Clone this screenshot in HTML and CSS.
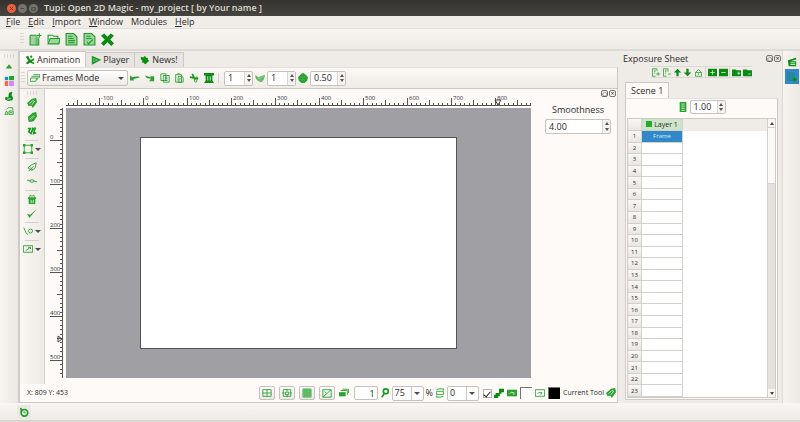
FILE: index.html
```html
<!DOCTYPE html>
<html lang="en">
<head>
<meta charset="utf-8">
<title>Tupi: Open 2D Magic</title>
<link rel="stylesheet" href="styles.css">
</head>
<body>
<svg class="defs" aria-hidden="true">
  <symbol id="new" viewBox="0 0 12 12"><path class="soft" d="M1 2h7v9H1z"/><path class="line" d="M1 2h6M1 2v9h8V5"/><path class="fill" d="M6 3v8h3V4z" opacity=".5"/><path class="line" d="M9.500.3v4M7.500 2.300h4"/></symbol>
  <symbol id="open" viewBox="0 0 12 12"><path class="line" d="M1 9V2h4l1 1h4v2"/><path class="soft" d="M2 5h10l-1 5H1z"/><path class="line" d="M3 5h9l-1 5H1z"/></symbol>
  <symbol id="save" viewBox="0 0 12 12"><path class="soft" d="M1 .5h7l3 3V11H1z"/><path class="line" d="M1 .5h7l3 3V11H1zM3 3h4M3 5h5M3 7h6M3 9h6"/></symbol>
  <symbol id="saveas" viewBox="0 0 12 12"><path class="soft" d="M1 .5h7l3 3V11H1z"/><path class="line" d="M1 .5h7l3 3V11H1zM3 3h4M3 5h5M4 8l1 2 4-4"/></symbol>
  <symbol id="close" viewBox="0 0 12 12"><path class="dark" d="M3 .5 6 3.500 9 .5 12 2.500 8.500 6 12 9.500 9.500 12 6 8.500 2.500 12 0 9.500 3.500 6 0 2.500z"/></symbol>
  <symbol id="anim" viewBox="0 0 12 12"><path class="dark" d="M1 2 4 1l1 3 2 2 4-2v2L8 8l3 1v2L6 9l-3 2-2-1 3-3z"/><circle class="dark" cx="7.500" cy="2" r="1.300"/></symbol>
  <symbol id="play" viewBox="0 0 12 12"><path class="thick" d="M2 2.500 10 6 2 10z"/><path class="fill" d="M3 4v4l4-2z"/></symbol>
  <symbol id="news" viewBox="0 0 12 12"><path class="dark" d="M1 2l3 1 2-2 1 2 3 1-1 1 2 2-3 3-2 1-2-2H2l1-2-2-2z"/></symbol>
  <symbol id="frames" viewBox="0 0 12 12"><path class="line" d="M1 6h7l-1 4H0zM2 4h8l-1 4M4 2h8l-1 4"/></symbol>
  <symbol id="undo" viewBox="0 0 12 12"><path class="fill" d="M0 3v6h5L4 7.500 12 5 9 4 3 5z"/></symbol>
  <symbol id="redo" viewBox="0 0 12 12"><path class="fill" d="M11 10V4H6l1.500 1.500L0 3l2 3 5 1-2 3z"/></symbol>
  <symbol id="copy" viewBox="0 0 12 12"><path class="line" d="M1 1h6v8H1zM4 3h7v8H4zM6 5h3M6 7h3M6 9h3"/></symbol>
  <symbol id="paste" viewBox="0 0 12 12"><path class="line" d="M2 2h7v9H2zM4 1h3M5 4h5l1 2v5H5zM7 6v3"/></symbol>
  <symbol id="cut" viewBox="0 0 12 12"><path class="thick" d="M4 1l3 7M1 5l10 2"/><circle class="line" cx="8" cy="9.500" r="1.500"/><circle class="line" cx="9.500" cy="5.500" r="1"/></symbol>
  <symbol id="trash" viewBox="0 0 12 12"><path class="dark" d="M0 0h12v3H0zM2 3h8v6l2 3H0l2-3z"/><path class="pale" d="M4.500 4v5M7.500 4v5"/></symbol>
  <symbol id="hand" viewBox="0 0 12 12"><path class="fill" d="M0 2l4 3 3-1 5-2-1 5-3 4-4-1-3-3z" opacity=".7"/><path class="pale" d="M4 6l2 1 3-3" opacity=".5"/></symbol>
  <symbol id="drop" viewBox="0 0 12 12"><path class="fill" d="M6 0 8 1l4 4-1 4-3 3H4L1 9 0 5l4-4z"/><path class="pale" d="M3 5h6M3 8h5" opacity=".2"/></symbol>
  <symbol id="pencil" viewBox="0 0 12 12"><path class="fill" d="M0 6l6-5 5-1 1 5-5 7-2-3-3 1z"/><path class="pale" d="M3 7l4-4 2 1-3 4" /></symbol>
  <symbol id="ink" viewBox="0 0 12 12"><path class="fill" d="M1 6l6-5 4-1 1 5-4 6-6 1z"/><path class="pale" d="M3 9l5-5M5 9l4-4" opacity=".8"/></symbol>
  <symbol id="scheme" viewBox="0 0 12 12"><path class="thick" d="M1 3h3l-2 4 3 2 2-6 2 1-1 5 3-1"/><circle class="fill" cx="9.500" cy="3" r="1.500"/></symbol>
  <symbol id="rect" viewBox="0 0 12 12"><path class="line" d="M1.500 1.500h9v9h-9z"/><path class="fill" d="M0 0h3v3H0zM9 0h3v3H9zM9 9h3v3H9zM0 9h3v3H0z"/></symbol>
  <symbol id="pen" viewBox="0 0 12 12"><path class="line" d="M1 7l5-4 5-2-1 6-4 3zM2 11l6-6M4 7l3 2"/></symbol>
  <symbol id="node" viewBox="0 0 12 12"><path class="line" d="M0 5l4 1M8 6l4 1"/><ellipse class="line" cx="6" cy="6" rx="2.500" ry="1.500"/></symbol>
  <symbol id="bucket" viewBox="0 0 12 12"><path class="fill" d="M1 4h10v2H1zM2 6h8v6H2z"/><path class="line" d="M3 4l1-3 2 2 2-2 1 3"/><path class="pale" d="M5 7v4M7.500 7v4"/></symbol>
  <symbol id="brush" viewBox="0 0 12 12"><path class="fill" d="M12 1 6 8 3 12 0 7l4 1z"/></symbol>
  <symbol id="motion" viewBox="0 0 12 12"><path class="line" d="M1 2l3 7 2 1"/><circle class="line" cx="9" cy="6" r="2.400"/></symbol>
  <symbol id="view" viewBox="0 0 12 12"><path class="line" d="M.5 2h11v8H.5zM3 8l6-4M6 4h3v2"/></symbol>
  <symbol id="shapes" viewBox="0 0 12 12"><path d="M1 1h4v4H1z" fill="#1689e8"/><path d="M6 0h6v5H6z" fill="#20a829"/><path d="M1 6h4v6H1z" fill="#ff6734"/><path d="M6 6h6v6H6z" fill="#d486ff"/></symbol>
  <symbol id="lamp" viewBox="0 0 12 12"><path class="dark" d="M6 2l4-1-1 4 2 3-1 3-5 1-4-2 1-3 3 1z"/><path class="pale" d="M4 10l4-1"/></symbol>
  <symbol id="group" viewBox="0 0 12 12"><path class="line" d="M1 10l2-4 2 4zM3 4l2-2h5l1 3M6 10V6h5v4zM7 8h3"/></symbol>
  <symbol id="g1" viewBox="0 0 12 12"><path class="line" d="M1 2h10v8H1zM6 2v8M1 6h10"/></symbol>
  <symbol id="g2" viewBox="0 0 12 12"><path class="line" d="M1.500 2h9v8h-9zM4 5h4v3H4zM6 1v3M6 8v3M0 6h3M9 6h3"/></symbol>
  <symbol id="g3" viewBox="0 0 12 12"><path class="soft" d="M1 1h10v10H1z"/><path class="line" d="M1 1h10v10H1zM3.500 1v10M6 1v10M8.500 1v10M1 3.500h10M1 6h10M1 8.500h10" opacity=".7"/></symbol>
  <symbol id="g4" viewBox="0 0 12 12"><path class="line" d="M1 2h10v9H1zM1 11l10-9M3 4l2 2"/></symbol>
  <symbol id="onion" viewBox="0 0 12 12"><path class="fill" d="M0 5h8v5H0z"/><path class="line" d="M2 3h8v5M4 1.500h7.500V6"/></symbol>
  <symbol id="zoomi" viewBox="0 0 12 12"><circle class="thick" cx="7" cy="4" r="3"/><path class="thick" d="M5 7l-3 4"/></symbol>
  <symbol id="rot" viewBox="0 0 12 12"><path class="line" d="M2 4h8v4H2zM2 2l3-1h4l1 1M10 .5V3M10 10l-3 1H3L2 10M2 11.500V9"/></symbol>
  <symbol id="alias" viewBox="0 0 12 12"><path class="dark" d="M6 1h6v4H9v2H7v3H5v2H0V8h2V6h4z"/></symbol>
  <symbol id="fillc" viewBox="0 0 12 12"><path class="fill" d="M0 2h12v8H0z"/><path class="pale" d="M3 7l2-2 4 1M7 7h2"/></symbol>
  <symbol id="linec" viewBox="0 0 12 12"><path class="line" d="M.5 2h11v8H.5zM3 7l2-2 3 1M7 8l1-3"/></symbol>
  <symbol id="fplus" viewBox="0 0 12 12"><path class="line" d="M8 4V1H2v10h4M4 3h2M4 5h2M4 7h1M7 8h5M9.500 5.500v5"/></symbol>
  <symbol id="fminus" viewBox="0 0 12 12"><path class="line" d="M8 5V1H2v10h4M4 3h2M4 5h2M4 7h1M8 8h4"/></symbol>
  <symbol id="up" viewBox="0 0 12 12"><path class="dark" d="M6 1l5 5H7.500v5h-3V6H1z"/></symbol>
  <symbol id="down" viewBox="0 0 12 12"><path class="dark" d="M6 11 1 6h3.500V1h3v5H11z"/></symbol>
  <symbol id="lock" viewBox="0 0 12 12"><path class="line" d="M2 6h8v5H2zM2 6l4-4 4 4M6 7v2"/></symbol>
  <symbol id="plus" viewBox="0 0 12 12"><path class="dark" d="M0 1h12v10H0z"/><path class="pale" d="M3 6h6M6 3v6"/></symbol>
  <symbol id="minus" viewBox="0 0 12 12"><path class="dark" d="M0 1h12v10H0z"/><path class="pale" d="M3 6h6"/></symbol>
  <symbol id="folderp" viewBox="0 0 12 12"><path class="dark" d="M0 2h5l1 1h6v8H0z"/><path class="pale" d="M7 7h4M9 5v4"/></symbol>
  <symbol id="folderm" viewBox="0 0 12 12"><path class="dark" d="M0 2h5l1 1h6v8H0z"/><path class="pale" d="M7 8h3"/></symbol>
  <symbol id="sheet" viewBox="0 0 12 12"><path class="fill" d="M2 0h8v12H2z"/><path class="pale" d="M4 2.500h4M4 5h4M4 7.500h4M4 10h4"/></symbol>
  <symbol id="books" viewBox="0 0 12 12"><path class="dark" d="M1 4l10-3v2L4 5h7v6H2z"/><path class="pale" d="M4 7h6M4 9h6"/></symbol>
  <symbol id="grid" viewBox="0 0 12 12"><path d="M0 1h9v9H0zM0 3h9M0 5.500h9M0 8h9M3 1v9M6 1v9" fill="none" stroke="#1c8a86"/><path class="dark" d="M8 6l4 3-3 3-2-3z"/></symbol>
  <symbol id="timer" viewBox="0 0 12 12"><circle class="thick" cx="6.500" cy="7" r="4"/><path class="thick" d="M2 1l1 4"/><path class="line" d="M6 5v2h2"/></symbol>
  <symbol id="triup" viewBox="0 0 12 12"><path class="fill" d="M6 4l4 5H2z"/></symbol>
</svg>

<header class="titlebar">
  <button class="wm wm-close" aria-label="Close"><svg viewBox="0 0 8 8"><path d="M2 2l4 4M6 2 2 6"/></svg></button>
  <button class="wm" aria-label="Minimize"><svg viewBox="0 0 8 8"><path d="M2 4h4"/></svg></button>
  <button class="wm" aria-label="Maximize"><svg viewBox="0 0 8 8"><path d="M2 3h4v3H2z"/></svg></button>
  <h1>Tupi: Open 2D Magic - my_project [ by Your name ]</h1>
</header>
<nav class="menubar">
  <button><u>F</u>ile</button><button><u>E</u>dit</button><button><u>I</u>mport</button><button><u>W</u>indow</button><button>Modules</button><button><u>H</u>elp</button>
</nav>
<div class="toolbar">
  <span class="grip"></span>
  <button aria-label="New"><svg><use href="#new"/></svg></button>
  <button aria-label="Open"><svg><use href="#open"/></svg></button>
  <button aria-label="Save"><svg><use href="#save"/></svg></button>
  <button aria-label="Save as"><svg><use href="#saveas"/></svg></button>
  <button aria-label="Close project"><svg><use href="#close"/></svg></button>
</div>

<div class="workspace">
  <aside class="dock">
    <span class="grip-h"></span>
    <button aria-label="Collapse"><svg><use href="#triup"/></svg></button>
    <button aria-label="Colors"><svg><use href="#shapes"/></svg></button>
    <button aria-label="Brushes"><svg><use href="#lamp"/></svg></button>
    <button aria-label="Library"><svg><use href="#group"/></svg></button>
  </aside>

  <main class="center">
    <div class="tabs">
      <button class="tab active"><svg><use href="#anim"/></svg>Animation</button>
      <button class="tab"><svg><use href="#play"/></svg>Player</button>
      <button class="tab"><svg><use href="#news"/></svg>News!</button>
    </div>
    <div class="framebar">
      <span class="grip"></span>
      <div class="combo mode"><svg class="lead"><use href="#frames"/></svg><select aria-label="Mode"><option>Frames Mode</option></select><i class="tri"></i></div>
      <div class="edit">
        <button aria-label="Undo"><svg><use href="#undo"/></svg></button>
        <button aria-label="Redo"><svg><use href="#redo"/></svg></button>
        <button aria-label="Copy"><svg><use href="#copy"/></svg></button>
        <button aria-label="Paste"><svg><use href="#paste"/></svg></button>
        <button aria-label="Cut"><svg><use href="#cut"/></svg></button>
        <button aria-label="Delete"><svg><use href="#trash"/></svg></button>
      </div>
      <span class="vsep"></span>
      <div class="spin"><input aria-label="Previous frames" value="1"><span><button aria-label="Up"></button><button aria-label="Down"></button></span></div>
      <svg><use href="#hand"/></svg>
      <div class="spin"><input aria-label="Next frames" value="1"><span><button aria-label="Up"></button><button aria-label="Down"></button></span></div>
      <svg><use href="#drop"/></svg>
      <div class="spin wide"><input aria-label="Opacity" value="0.50"><span><button aria-label="Up"></button><button aria-label="Down"></button></span></div>
    </div>

    <div class="editor">
      <div class="tools">
        <span class="grip-h"></span>
        <button aria-label="Pencil"><svg><use href="#pencil"/></svg></button>
        <button aria-label="Ink"><svg><use href="#ink"/></svg></button>
        <button aria-label="Scheme"><svg><use href="#scheme"/></svg></button>
        <hr>
        <button aria-label="Rectangle"><svg><use href="#rect"/></svg><i class="tri"></i></button>
        <hr>
        <button aria-label="Select"><svg><use href="#pen"/></svg></button>
        <button aria-label="Nodes"><svg><use href="#node"/></svg></button>
        <hr>
        <button aria-label="Fill"><svg><use href="#bucket"/></svg></button>
        <button aria-label="Line color"><svg><use href="#brush"/></svg></button>
        <hr>
        <button aria-label="Motion"><svg><use href="#motion"/></svg><i class="tri"></i></button>
        <hr>
        <button aria-label="View"><svg><use href="#view"/></svg><i class="tri"></i></button>
      </div>
      <div class="stage">
        <svg class="ruler-x" id="rulerX"></svg>
        <svg class="ruler-y" id="rulerY"></svg>
        <div class="canvas"><div class="paper"></div></div>
      </div>
      <div class="props">
        <div class="dockbtns"><button aria-label="Float">◇</button><button aria-label="Close">×</button></div>
        <label for="smooth">Smoothness</label>
        <div class="spin"><input id="smooth" value="4.00"><span><button aria-label="Up"></button><button aria-label="Down"></button></span></div>
      </div>
    </div>

    <div class="statusrow">
      <span class="coords">X: 809 Y: 453</span>
      <div class="views">
        <button aria-label="Grid"><svg><use href="#g1"/></svg></button>
        <button aria-label="Safe area"><svg><use href="#g2"/></svg></button>
        <button aria-label="Fine grid"><svg><use href="#g3"/></svg></button>
        <button aria-label="Full"><svg><use href="#g4"/></svg></button>
      </div>
      <svg class="mid"><use href="#onion"/></svg>
      <input class="frame" aria-label="Frame" value="1">
      <svg><use href="#zoomi"/></svg>
      <div class="combo split"><select aria-label="Zoom"><option>75</option></select><i class="tri"></i></div>
      <span class="pct">%</span>
      <svg><use href="#rot"/></svg>
      <div class="combo split"><select aria-label="Rotation"><option>0</option></select><i class="tri"></i></div>
      <input type="checkbox" aria-label="Antialiasing" checked>
      <svg><use href="#alias"/></svg>
      <svg class="mid"><use href="#fillc"/></svg>
      <button class="swatch" aria-label="Fill color"></button>
      <svg class="mid"><use href="#linec"/></svg>
      <button class="swatch black" aria-label="Stroke color"></button>
      <span class="current">Current Tool</span>
      <svg><use href="#pencil"/></svg>
    </div>
  </main>

  <section class="exposure">
    <div class="head"><h2>Exposure Sheet</h2><div class="dockbtns"><button aria-label="Float">◇</button><button aria-label="Close">×</button></div></div>
    <div class="sheetbar">
      <button aria-label="Insert frame"><svg><use href="#fplus"/></svg></button>
      <button aria-label="Remove frame"><svg><use href="#fminus"/></svg></button>
      <button aria-label="Move up"><svg><use href="#up"/></svg></button>
      <button aria-label="Move down"><svg><use href="#down"/></svg></button>
      <button aria-label="Lock"><svg><use href="#lock"/></svg></button>
      <span class="vsep"></span>
      <button aria-label="Insert layer"><svg><use href="#plus"/></svg></button>
      <button aria-label="Remove layer"><svg><use href="#minus"/></svg></button>
      <span class="vsep"></span>
      <button aria-label="Insert scene"><svg><use href="#folderp"/></svg></button>
      <button aria-label="Remove scene"><svg><use href="#folderm"/></svg></button>
    </div>
    <button class="tab active scene">Scene 1</button>
    <div class="pane">
      <div class="opacity"><svg><use href="#sheet"/></svg><div class="spin wide"><input aria-label="Layer opacity" value="1.00"><span><button aria-label="Up"></button><button aria-label="Down"></button></span></div></div>
      <div class="sheet">
        <div class="cells"><table>
          <thead><tr><th></th><th><b></b>Layer 1</th></tr></thead>
          <tbody id="rows"></tbody>
        </table></div>
        <div class="scroll"><button aria-label="Scroll up"></button><div class="thumb"></div><button aria-label="Scroll down"></button></div>
      </div>
    </div>
  </section>

  <aside class="dock right">
    <button aria-label="Help"><svg><use href="#books"/></svg></button>
    <button class="on" aria-label="Exposure sheet"><svg><use href="#grid"/></svg></button>
  </aside>
</div>

<footer class="bottom"><button aria-label="Time line"><svg><use href="#timer"/></svg></button></footer>
<script src="app.js"></script>
</body>
</html>
```
FILE: styles.css
```css
* { box-sizing: border-box; margin: 0; }
body {
  height: 100vh;
  display: flex;
  flex-direction: column;
  overflow: hidden;
  background: #efebe7;
  color: #2c2c2c;
  font: 9px/12px "Open Sans", "Noto Sans", sans-serif;
}
button, input, select { font: inherit; color: inherit; padding: 0; border: 0; background: none; }
button { display: flex; align-items: center; justify-content: center; }
svg { display: block; width: 10px; height: 10px; flex: none; }
.defs { position: absolute; width: 0; height: 0; }
.fill { fill: #2ba232; }
.dark { fill: #0a8c12; }
.soft { fill: #9fd3a0; }
.line { fill: none; stroke: #1f9c26; stroke-width: 1; }
.thick { fill: none; stroke: #189a20; stroke-width: 2; }
.pale { fill: none; stroke: #e6f5e4; stroke-width: 1; }

.titlebar {
  height: 16px;
  display: flex;
  align-items: center;
  gap: 2px;
  padding-left: 7px;
  background: linear-gradient(#33322e, #45443f);
  color: #dfdbd2;
}
.titlebar h1 { font-size: 9px; font-weight: 600; margin-left: 4px; white-space: nowrap; }
.wm { width: 9px; height: 9px; border-radius: 50%; background: #75736c; }
.wm svg { width: 7px; height: 7px; }
.wm path { stroke: #45433e; fill: none; }
.wm-close { background: #f0603a; }

.menubar { height: 13px; display: flex; gap: 8px; padding-left: 6px; background: #f0ede9; border-bottom: 1px solid #e3dfda; }

.toolbar {
  height: 22px;
  display: flex;
  align-items: center;
  gap: 4px;
  padding-left: 20px;
  background: linear-gradient(#f8f5f2, #eeebe6);
  border-bottom: 2px solid #dedad5;
}
.toolbar button { width: 14px; }
.toolbar svg { width: 13px; height: 13px; }
.grip { width: 4px; height: 12px; background: repeating-linear-gradient(#dad6d1 0 1px, transparent 1px 3px); }
.grip-h { width: 10px; height: 4px; background: repeating-linear-gradient(90deg, #dad6d1 0 1px, transparent 1px 3px); }

.workspace { flex: 1; min-height: 0; display: flex; }
.dock {
  width: 19px;
  display: flex;
  flex-direction: column;
  align-items: center;
  padding-top: 3px;
  background: linear-gradient(90deg, #f8f5f1, #ece9e4);
  border-right: 1px solid #cfcbc6;
}
.dock button { width: 14px; height: 15px; }
.dock.right { width: 18px; border: 0; border-left: 1px solid #dcd8d3; }
.dock .on { background: #3388c6; }

.center { flex: 1; min-width: 0; display: flex; flex-direction: column; }
.tabs { height: 16px; display: flex; align-items: flex-end; }
.tab {
  height: 15px;
  gap: 2px;
  padding: 0 5px;
  background: #e7e4e1;
  border: 1px solid #cdc9c5;
  border-bottom: 0;
  border-left: 0;
}
.tab.active { height: 16px; background: #fdfaf8; border-left: 1px solid #cdc9c5; }
.framebar {
  height: 22px;
  display: flex;
  align-items: center;
  gap: 2px;
  padding-left: 1px;
  background: linear-gradient(#fbf8f5, #efece7);
  border: 1px solid #cdc9c5;
  border-top-color: #e3e0dc;
}
.edit { display: flex; justify-content: space-between; width: 84px; }
.vsep { width: 1px; height: 10px; background: #d4d0cb; }
.framebar .vsep { margin: 0 3px 0 2px; }

.combo {
  position: relative;
  height: 16px;
  display: flex;
  align-items: center;
  border: 1px solid #c5c1bc;
  border-radius: 2px;
  background: #fff;
}
.combo select { appearance: none; flex: 1; min-width: 0; height: 100%; padding-left: 3px; outline: 0; }
.mode { width: 101px; background: linear-gradient(#fff, #eeebe7); }
.mode .lead { margin-left: 2px; }
.mode select { padding-left: 2px; }
.combo .tri { margin: 0 3px; }
.tri { width: 0; height: 0; border: 3px solid transparent; border-top-color: #4c4c4c; border-bottom: 0; }
.split { width: 32px; }
.split::after { content: ""; position: absolute; right: 11px; top: 0; bottom: 0; width: 1px; background: #cdc9c5; }

.spin {
  display: flex;
  width: 29px;
  height: 15px;
  border: 1px solid #c5c1bc;
  border-radius: 2px;
  background: #fff;
}
.spin.wide { width: 36px; }
.spin input { flex: 1; width: 0; min-width: 0; padding-left: 3px; outline: 0; }
.spin span { width: 8px; display: flex; flex-direction: column; justify-content: space-evenly; align-items: center; background: #f5f2ef; border-left: 1px solid #d9d5d0; }
.spin span button { width: 0; height: 0; border: 2px solid transparent; border-bottom: 3px solid #555; border-top: 0; }
.spin span button:last-child { border-top: 3px solid #555; border-bottom: 0; }

.editor { flex: 1; min-height: 0; display: flex; background: #fdfaf7; border: 1px solid #cdc9c5; border-width: 0 1px; }
.tools {
  width: 25px;
  display: flex;
  flex-direction: column;
  align-items: center;
  background: linear-gradient(90deg, #f9f6f3, #eeebe6);
  border-right: 1px solid #d3cfca;
}
.tools .grip-h { margin: 2px 0 1px; }
.tools button { height: 14px; gap: 2px; }
.tools hr { width: 14px; height: 1px; margin: 2px 0 1px; border: 0; background: #d3cfca; }
.stage {
  flex: 1;
  min-width: 0;
  display: grid;
  grid-template: 19px minmax(0, 1fr) / 21px minmax(0, 1fr);
  padding-bottom: 6px;
}
.ruler-x { grid-area: 1 / 2; width: 100%; height: 17px; }
.ruler-y { grid-area: 2 / 1; width: 18px; height: 100%; }
.ruler-x line, .ruler-y line { stroke: #555; shape-rendering: crispEdges; }
.ruler-x text, .ruler-y text { font-size: 6px; fill: #333; }
.canvas { grid-area: 2 / 2; display: flex; align-items: center; justify-content: center; background: #a09fa4; }
.paper { width: 317px; height: 212px; background: #fff; border: 1px solid #55545a; }

.props { width: 86px; display: flex; flex-direction: column; align-items: center; padding: 0 1px 0 9px; }
.dockbtns { display: flex; gap: 1px; }
.dockbtns button { width: 7px; height: 7px; border: 1px solid #77736f; border-radius: 2px; font-size: 7px; line-height: 5px; }
.props .dockbtns { align-self: flex-end; margin: 1px 0 7px; }
.props label { margin-bottom: 3px; }
.props .spin { width: 66px; }

.statusrow {
  height: 19px;
  display: flex;
  align-items: center;
  gap: 2px;
  padding: 0 1px 0 7px;
  background: #fdfaf7;
  border: 1px solid #cdc9c5;
  border-top: 0;
}
.coords, .current { font-size: 7px; white-space: nowrap; }
.coords { margin-right: auto; }
.views { display: flex; gap: 4px; }
.views button, .frame { height: 14px; border: 1px solid #c5c1bc; border-radius: 2px; }
.views button { width: 16px; background: linear-gradient(#fff, #ebe8e4); }
.mid { margin: 0 1px; }
.views + .mid { margin: 0 3px 0 2px; }
.frame { width: 24px; background: #fff; text-align: right; padding-right: 2px; }
.statusrow .combo { height: 15px; }
.split select { padding-left: 2px; }
.statusrow input[type="checkbox"] { appearance: none; width: 9px; height: 9px; margin-left: 2px; border: 1px solid #b5b1ac; background: #fff; display: grid; place-items: center; }
.statusrow input:checked::before { content: ""; width: 3px; height: 6px; border: solid #222; border-width: 0 1px 1px 0; transform: rotate(40deg); }
.swatch { width: 12px; height: 12px; background: #fff; border: 1px solid #77736f; border-right: 0; border-bottom: 0; }
.black { background: #000; }
.current { margin-left: 1px; }

.exposure { width: 164px; display: flex; flex-direction: column; padding: 0 4px 3px 7px; }
.head { height: 15px; display: flex; align-items: center; justify-content: space-between; }
.head h2 { font-size: 9px; font-weight: 400; margin-left: -2px; }
.head .dockbtns { margin-right: -3px; }
.sheetbar { height: 12px; align-self: flex-end; width: 101px; margin-right: 26px; display: flex; align-items: center; justify-content: space-between; border: 1px solid #dcd8d3; border-width: 1px 0; background: #f0ede9; }
.sheetbar svg { width: 9px; height: 9px; }
.scene { align-self: flex-start; height: 17px; margin-top: 4px; }
.pane { flex: 1; min-height: 0; display: flex; flex-direction: column; padding: 1px; background: #fdfaf7; border: 1px solid #cdc9c5; border-top-color: #e3e0dc; }
.opacity { display: flex; align-items: center; justify-content: center; gap: 2px; margin-bottom: 4px; }
.opacity .spin { height: 14px; }
.sheet { flex: 1; min-height: 0; display: flex; background: #fff; border: 1px solid #cdc9c5; }
.cells { flex: 1; overflow: hidden; background: linear-gradient(#efebe7 12px, #fff 12px); }
table { height: 100%; border-collapse: separate; border-spacing: 0; table-layout: fixed; width: 55px; line-height: 8px; }
th, td { padding: 0; border: solid #d3d0cc; border-width: 0 1px 1px 0; font-size: 6px; font-weight: 400; text-align: center; }
th { background: linear-gradient(#faf8f6, #e9e6e2); width: 14px; }
thead th { height: 12px; }
thead th:last-child { width: 41px; background: #cde3ca; font-size: 7px; }
thead b { display: inline-block; width: 6px; height: 6px; margin-right: 2px; background: #22ac2c; }
.chosen { background: #3088c6; color: #d8efff; }
.scroll { width: 8px; display: flex; flex-direction: column; background: #e4e0dc; border-left: 1px solid #d3cfca; }
.scroll button { height: 8px; background: #f8f5f2; }
.scroll button::before { content: ""; border: 2px solid transparent; border-bottom: 3px solid #444; border-top: 0; }
.scroll button:last-child::before { border-top: 3px solid #444; border-bottom: 0; }
.thumb { height: 57px; margin-bottom: auto; background: #fbf9f7; border: 1px solid #d3cfca; border-width: 1px 0; }

.bottom { height: 19px; padding: 2px 0 0 17px; background: linear-gradient(#f9f6f3, #eeebe7); border-bottom: 2px solid #d9d5d1; }
.bottom button { width: 14px; height: 13px; background: #ebe8e4; }
```
FILE: app.js
```js
const NS = "http://www.w3.org/2000/svg";
const UNIT = 44; // pixels per 100 scene units at 75% zoom

function add(parent, name, attrs, text) {
  const el = document.createElementNS(NS, name);
  for (const key in attrs) el.setAttribute(key, attrs[key]);
  if (text !== undefined) el.textContent = text;
  parent.appendChild(el);
}

function drawRuler(svg, origin, vertical) {
  const size = vertical ? svg.clientHeight : svg.clientWidth;
  const edge = vertical ? 17 : 16;
  for (let i = -17; i < 300; i++) {
    const p = Math.round(origin + i * UNIT / 10);
    if (p < 0 || p > size) continue;
    const label = i % 10 === 0;
    const len = label ? (vertical ? 12 : 7) : i % 5 === 0 ? 5 : 2;
    add(svg, "line", vertical
      ? { x1: edge - len, x2: edge, y1: p + 0.5, y2: p + 0.5 }
      : { x1: p + 0.5, x2: p + 0.5, y1: edge - len, y2: edge });
    if (label) add(svg, "text", vertical ? { x: 5, y: p - 1 } : { x: p + 2, y: 11 }, i * 10);
  }
  add(svg, "line", vertical
    ? { x1: edge, x2: edge, y1: 0, y2: size }
    : { x1: 0, x2: size, y1: edge, y2: edge });
}
drawRuler(document.getElementById("rulerX"), 77, false);
drawRuler(document.getElementById("rulerY"), 32, true);

// Pointer position markers
add(document.getElementById("rulerX"), "path", { d: "M429 11h6l-3 5z", fill: "none", stroke: "#444" });
add(document.getElementById("rulerY"), "path", { d: "M13 228v6l4-3z", fill: "none", stroke: "#444" });

const rows = document.getElementById("rows");
for (let n = 1; n <= 23; n++) {
  const tr = rows.insertRow();
  const th = document.createElement("th");
  th.textContent = n;
  tr.appendChild(th);
  const td = tr.insertCell();
  if (n === 1) { td.textContent = "Frame"; td.className = "chosen"; }
}
```
